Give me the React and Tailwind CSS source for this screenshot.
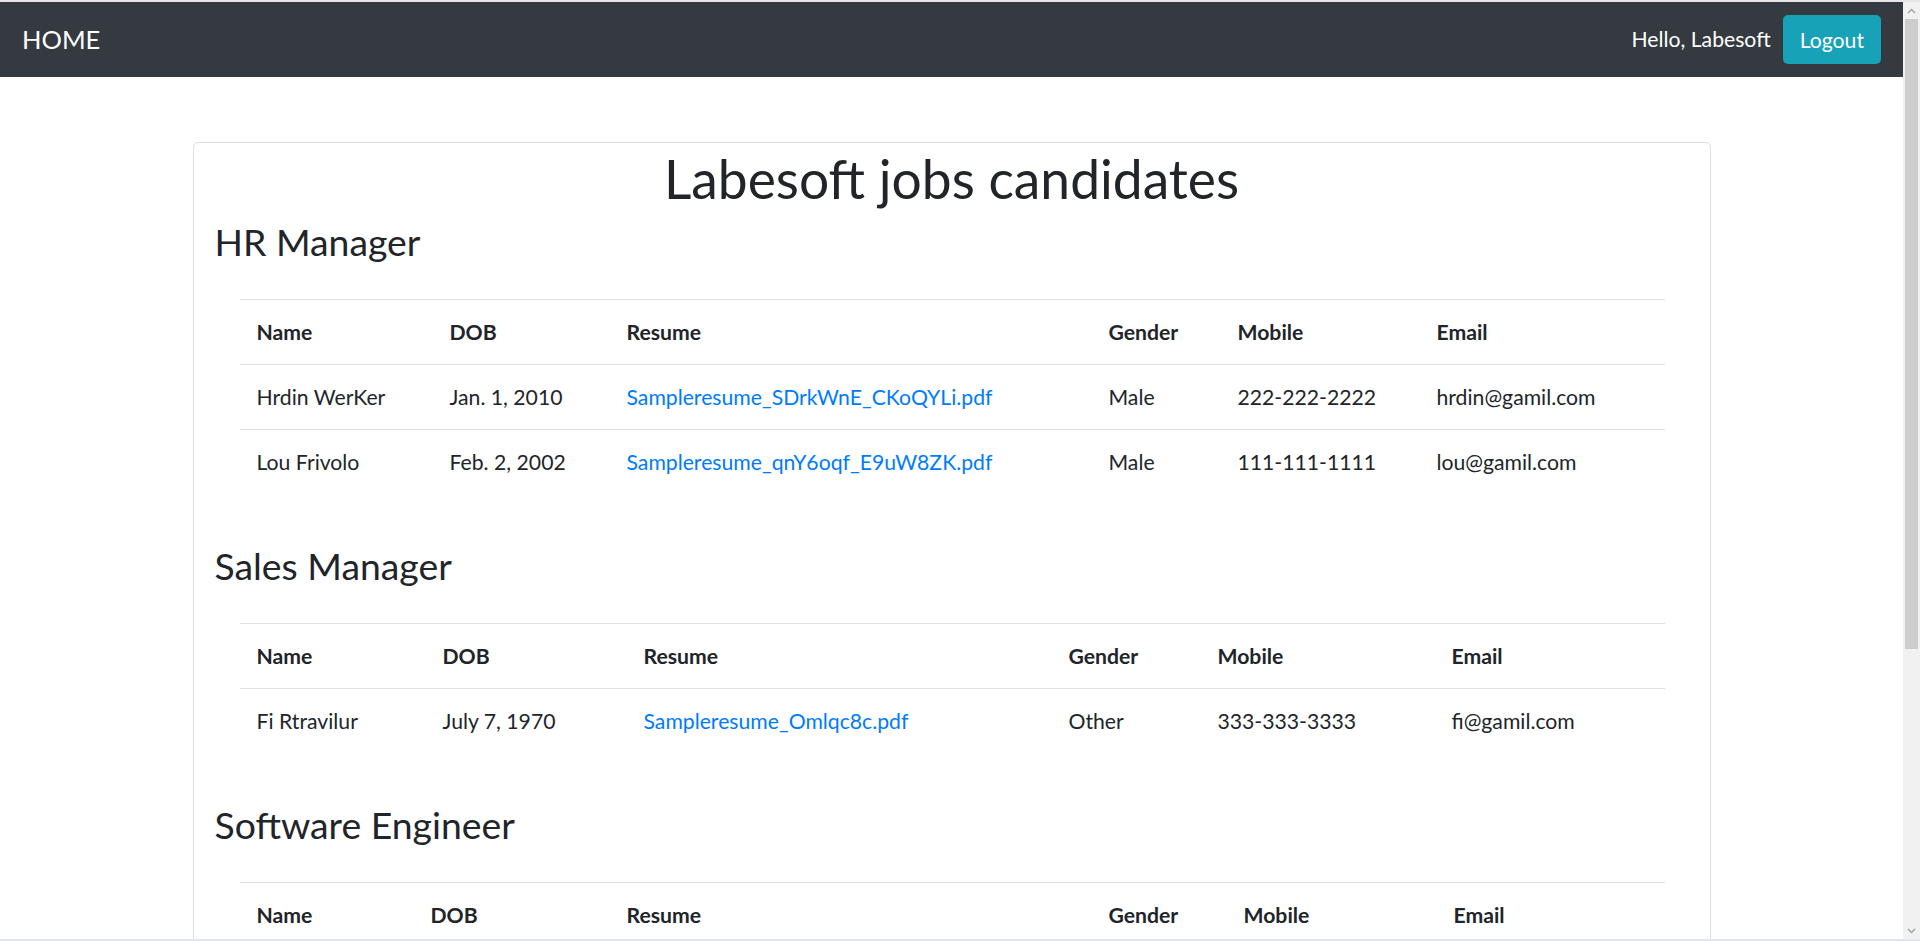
import React from 'react';

const jobs = [
  {
    title: 'HR Manager',
    cols: ['w-[193px]', 'w-[177px]', 'w-[482px]', 'w-[129px]', 'w-[199px]', 'w-[245px]'],
    rows: [
      ['Hrdin WerKer', 'Jan. 1, 2010', 'Sampleresume_SDrkWnE_CKoQYLi.pdf', 'Male', '222-222-2222', 'hrdin@gamil.com'],
      ['Lou Frivolo', 'Feb. 2, 2002', 'Sampleresume_qnY6oqf_E9uW8ZK.pdf', 'Male', '111-111-1111', 'lou@gamil.com'],
    ],
  },
  {
    title: 'Sales Manager',
    cols: ['w-[186px]', 'w-[201px]', 'w-[425px]', 'w-[149px]', 'w-[234px]', 'w-[230px]'],
    rows: [
      ['Fi Rtravilur', 'July 7, 1970', 'Sampleresume_Omlqc8c.pdf', 'Other', '333-333-3333', 'fi@gamil.com'],
    ],
  },
  {
    title: 'Software Engineer',
    cols: ['w-[174px]', 'w-[196px]', 'w-[482px]', 'w-[135px]', 'w-[210px]', 'w-[228px]'],
    rows: [],
  },
];

const headers = ['Name', 'DOB', 'Resume', 'Gender', 'Mobile', 'Email'];

function JobTable({ job }) {
  return (
    <div className="mb-[49px]">
      <h3 className="text-[37.33px] leading-[45px] mb-[35px]">{job.title}</h3>
      <table className="table-fixed border-collapse w-[1424px] mx-[25px]">
        <colgroup>
          {job.cols.map((c, i) => (
            <col key={i} className={c} />
          ))}
        </colgroup>
        <thead>
          <tr>
            {headers.map((h) => (
              <th key={h} className="text-left font-bold px-[17px] py-[16px] leading-[32px] border-t border-[#dee2e6]">
                {h}
              </th>
            ))}
          </tr>
        </thead>
        <tbody>
          {job.rows.map((r, i) => (
            <tr key={i}>
              {r.map((cell, j) => (
                <td key={j} className="px-[17px] py-[16px] leading-[32px] border-t border-[#dee2e6] whitespace-nowrap">
                  {j === 2 ? <a className="text-[#007bff]">{cell}</a> : cell}
                </td>
              ))}
            </tr>
          ))}
        </tbody>
      </table>
    </div>
  );
}

export default function App() {
  return (
    <div className="w-[1920px] h-[941px] overflow-hidden flex flex-col bg-white text-[#212529] text-[21.2px] font-['Lato',sans-serif]">
      <div className="h-[2px] bg-[#e6e6e6]" />
      <div className="flex flex-1 min-h-0">
        <div className="flex-1 min-w-0 overflow-hidden">
          <nav className="h-[75px] bg-[#343a40] px-[22px] flex items-center justify-between">
            <span className="text-white text-[25.5px]">HOME</span>
            <div className="flex items-center gap-[12px]">
              <span className="text-white">Hello, Labesoft</span>
              <button className="bg-[#17a2b8] text-white rounded-[5px] h-[49px] px-[17px] leading-[32px]">
                Logout
              </button>
            </div>
          </nav>
          <div className="w-[1518px] mx-auto mt-[65px] border border-[#dfdfdf] rounded-[5px] px-[21px] pt-[3px]">
            <h1 className="text-center text-[53.33px] leading-[64px] mb-[9px]">Labesoft jobs candidates</h1>
            {jobs.map((job) => (
              <JobTable key={job.title} job={job} />
            ))}
          </div>
        </div>
        <div className="w-[17px] bg-[#f1f1f1] flex flex-col">
          <div className="h-[17px] flex items-center justify-center">
            <svg width="9" height="6" viewBox="0 0 9 6">
              <path d="M1 5 L4.5 1.5 L8 5" stroke="#a3a3a3" strokeWidth="1.5" fill="none" />
            </svg>
          </div>
          <div className="h-[630px] mx-[2px] bg-[#cdcdcd]" />
          <div className="flex-1" />
          <div className="h-[17px] flex items-center justify-center">
            <svg width="9" height="6" viewBox="0 0 9 6">
              <path d="M1 1 L4.5 4.5 L8 1" stroke="#a3a3a3" strokeWidth="1.5" fill="none" />
            </svg>
          </div>
        </div>
      </div>
      <div className="h-[2px] bg-[#e1e5ef]" />
    </div>
  );
}
